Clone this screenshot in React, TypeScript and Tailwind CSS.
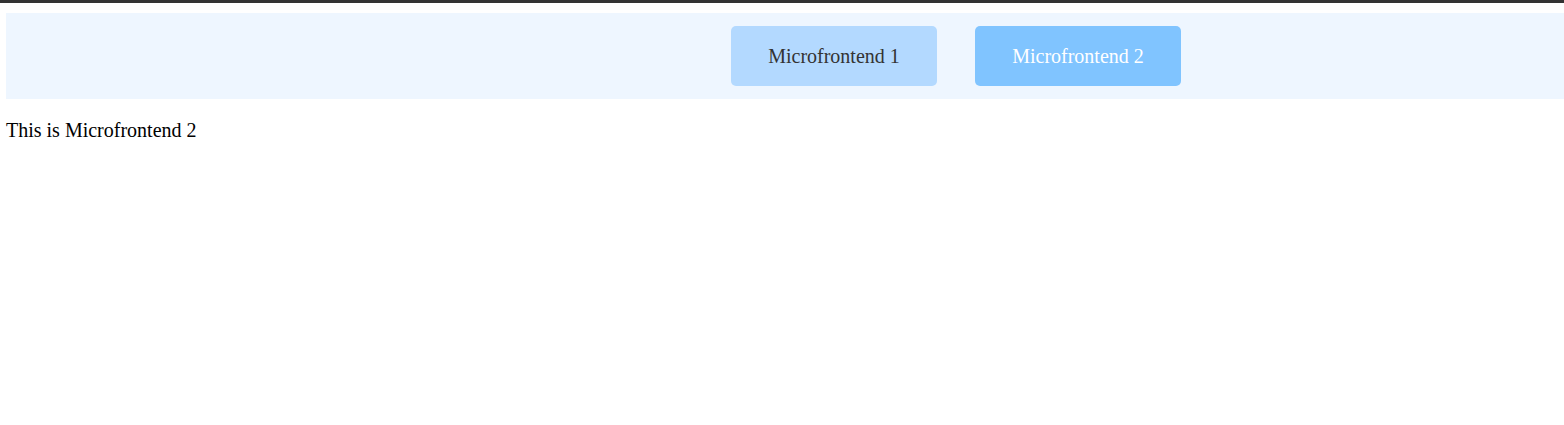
const App = () => {
  return (
    <div className="min-h-[425px] bg-white border-t-[3px] border-[#333333] px-[6px] pt-[10px] font-['Liberation_Serif',serif] text-[20px] leading-[normal]">
      <nav className="flex items-center h-[86px] bg-[#eef6ff] pl-[725px] gap-[38px] -mr-[6px]">
        <button className="w-[206px] h-[60px] rounded-[5px] bg-[#b3d9ff] text-[#333333]">
          Microfrontend 1
        </button>
        <button className="w-[206px] h-[60px] rounded-[5px] bg-[#80c4ff] text-white">
          Microfrontend 2
        </button>
      </nav>
      <p className="mt-[20px] text-black">This is Microfrontend 2</p>
    </div>
  );
};

export default App;
